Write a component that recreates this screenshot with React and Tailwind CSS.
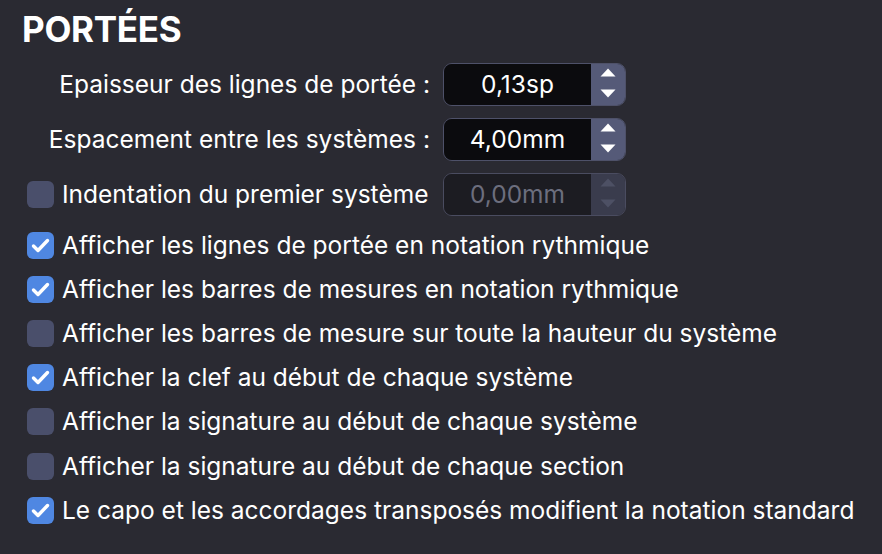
import { useState } from 'react';

function Checkbox({ checked, onChange, disabled }) {
  return (
    <button
      type="button"
      onClick={onChange}
      disabled={disabled}
      className={`w-[27px] h-[27px] shrink-0 rounded-[6px] flex items-center justify-center ${checked ? 'bg-[#4f87e2]' : 'bg-[#4a4f6b]'}`}
    >
      {checked && (
        <svg width="19" height="15" viewBox="0 0 19 15" fill="none">
          <path d="M2.5 8 L7 12.5 L16.5 2.5" stroke="white" strokeWidth="3.4" strokeLinecap="round" strokeLinejoin="round" />
        </svg>
      )}
    </button>
  );
}

function Spinner({ value, disabled }) {
  return (
    <div className={`w-[183px] h-[43px] flex rounded-[9px] border-[1.5px] overflow-hidden ${disabled ? 'border-[#4a4c60]' : 'border-[#4e5169]'}`}>
      <div className={`flex-1 flex items-center justify-center text-[24.5px] ${disabled ? 'bg-[#1c1c22] text-[#6c6e7e]' : 'bg-[#0b0b0e] text-white'}`}>
        {value}
      </div>
      <div className={`w-[34px] flex flex-col items-center justify-between py-[4px] ${disabled ? 'bg-[#3a3c4d]' : 'bg-[#555a78]'}`}>
        <svg width="16" height="9" viewBox="0 0 16 9">
          <path d="M8 0.5 L15.5 8.5 L0.5 8.5 Z" fill={disabled ? '#4d5064' : 'white'} />
        </svg>
        <svg width="16" height="9" viewBox="0 0 16 9" className="mb-[3px]">
          <path d="M0.5 0.5 L15.5 0.5 L8 8.5 Z" fill={disabled ? '#4d5064' : 'white'} />
        </svg>
      </div>
    </div>
  );
}

export default function App() {
  const [indent, setIndent] = useState(false);
  const [opts, setOpts] = useState([
    { label: 'Afficher les lignes de portée en notation rythmique', on: true },
    { label: 'Afficher les barres de mesures en notation rythmique', on: true },
    { label: 'Afficher les barres de mesure sur toute la hauteur du système', on: false },
    { label: 'Afficher la clef au début de chaque système', on: true },
    { label: 'Afficher la signature au début de chaque système', on: false },
    { label: 'Afficher la signature au début de chaque section', on: false },
    { label: 'Le capo et les accordages transposés modifient la notation standard', on: true },
  ]);

  const toggle = (i) => setOpts(opts.map((o, j) => (j === i ? { ...o, on: !o.on } : o)));

  return (
    <div className="w-[882px] h-[554px] bg-[#2a2a32] text-white font-['Inter',sans-serif] overflow-hidden">
      <h1 className="pl-[22px] pt-[8px] text-[35px] leading-[42px] font-bold tracking-[-0.3px]">PORTÉES</h1>

      <div className="pl-[27px] mt-[13px] flex flex-col gap-[12px]">
        <div className="flex items-center gap-[13px]">
          <div className="w-[403px] text-right text-[24.5px]">Epaisseur des lignes de portée :</div>
          <Spinner value="0,13sp" />
        </div>
        <div className="flex items-center gap-[13px]">
          <div className="w-[403px] text-right text-[24.5px]">Espacement entre les systèmes :</div>
          <Spinner value="4,00mm" />
        </div>
        <div className="flex items-center gap-[13px]">
          <div className="w-[403px] flex items-center gap-[8px] text-[24.5px]">
            <Checkbox checked={indent} onChange={() => setIndent(!indent)} />
            <span>Indentation du premier système</span>
          </div>
          <Spinner value="0,00mm" disabled={!indent} />
        </div>
      </div>

      <div className="pl-[27px] mt-[7px] flex flex-col">
        {opts.map((o, i) => (
          <div key={i} className="h-[44.2px] flex items-center gap-[8px] text-[24.5px]">
            <Checkbox checked={o.on} onChange={() => toggle(i)} />
            <span>{o.label}</span>
          </div>
        ))}
      </div>
    </div>
  );
}
